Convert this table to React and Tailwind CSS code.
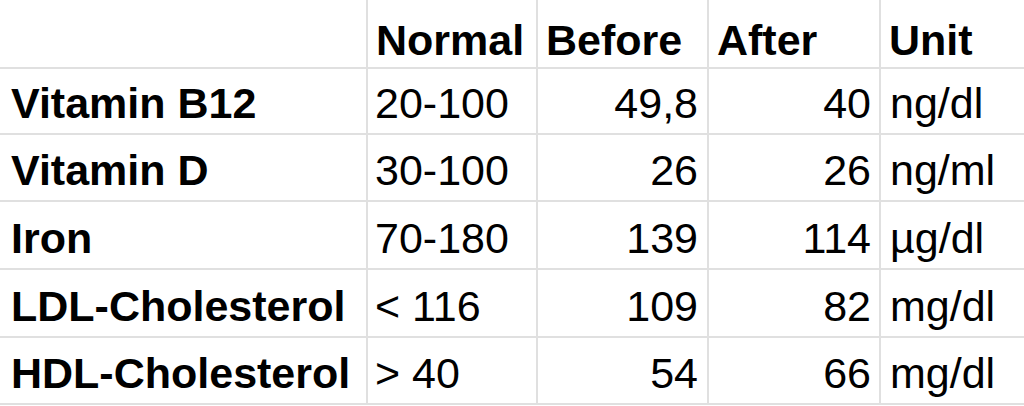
import React from 'react';

const rows = [
  ['Vitamin B12', '20-100', '49,8', '40', 'ng/dl'],
  ['Vitamin D', '30-100', '26', '26', 'ng/ml'],
  ['Iron', '70-180', '139', '114', 'µg/dl'],
  ['LDL-Cholesterol', '< 116', '109', '82', 'mg/dl'],
  ['HDL-Cholesterol', '> 40', '54', '66', 'mg/dl'],
];

const heads = ['', 'Normal', 'Before', 'After', 'Unit'];

export default function App() {
  return (
    <div className="w-[1024px] h-[406px] bg-white overflow-hidden font-['Liberation_Sans',Arial,sans-serif] text-black text-[43px] leading-none">
      <div className="grid grid-cols-[366px_168px_169px_170px_1fr] grid-rows-[67px_64px_65px_66px_66px_65px] gap-[2px] bg-[#e0e0e0] border-b-2 border-[#e0e0e0]">
        {heads.map((h, i) => (
          <div key={i} className="bg-white flex items-end pb-[5px] pl-[8px] font-bold">
            {h}
          </div>
        ))}
        {rows.map((r, ri) => (
          <React.Fragment key={ri}>
            <div className="bg-white flex items-end pb-[8px] pl-[11px] font-bold">{r[0]}</div>
            <div className="bg-white flex items-end pb-[8px] pl-[7px]">{r[1]}</div>
            <div className="bg-white flex items-end justify-end pb-[8px] pr-[9px]">{r[2]}</div>
            <div className="bg-white flex items-end justify-end pb-[8px] pr-[8px]">{r[3]}</div>
            <div className="bg-white flex items-end pb-[8px] pl-[9px]">{r[4]}</div>
          </React.Fragment>
        ))}
      </div>
    </div>
  );
}
